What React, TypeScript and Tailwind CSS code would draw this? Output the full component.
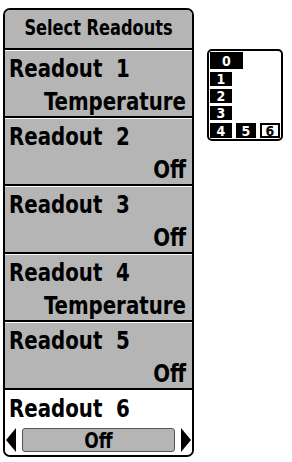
const rows = [
  { label: 'Readout  1', value: 'Temperature' },
  { label: 'Readout  2', value: 'Off' },
  { label: 'Readout  3', value: 'Off' },
  { label: 'Readout  4', value: 'Temperature' },
  { label: 'Readout  5', value: 'Off' },
]

function LayoutIcon() {
  return (
    <div className="ml-[13px] mt-[49px] w-[76px] h-[92px] border-2 border-black rounded-[5px] bg-white flex flex-col gap-[3px] p-[1px] text-white text-[14px] leading-none">
      <div className="w-[33px] h-[19px] bg-black flex items-center justify-center">0</div>
      <div className="w-[22px] h-[15px] bg-black flex items-center justify-center">1</div>
      <div className="w-[22px] h-[15px] bg-black flex items-center justify-center">2</div>
      <div className="w-[22px] h-[15px] bg-black flex items-center justify-center">3</div>
      <div className="flex gap-[4px]">
        <div className="w-[22px] h-[15px] bg-black flex items-center justify-center">4</div>
        <div className="w-[20px] h-[15px] bg-black flex items-center justify-center">5</div>
        <div className="w-[20px] h-[15px] border-2 border-black text-black flex items-center justify-center">6</div>
      </div>
    </div>
  )
}

export default function App() {
  return (
    <div className="w-[292px] h-[462px] bg-white flex items-start font-['DejaVu_Sans_Condensed','DejaVu_Sans',sans-serif] font-bold text-black">
      <div className="ml-[3px] mt-[8px] w-[191px] border-2 border-black rounded-[7px] overflow-hidden flex flex-col">
        <div className="h-[38px] bg-[#b5b5b5] flex items-center justify-center text-[18px] leading-none pb-[3px]">
          <span className="scale-y-[1.15]">Select Readouts</span>
        </div>
        {rows.map(r => (
          <div key={r.label} className="h-[68px] bg-[#b5b5b5] border-t-2 border-black shadow-[inset_0_1px_0_#fff] flex flex-col px-[4px] pt-[7px] text-[22px] leading-none">
            <div className="whitespace-pre scale-y-[1.12] origin-top">{r.label}</div>
            <div className="mt-[11px] text-right pr-[2px] scale-y-[1.12] origin-top">{r.value}</div>
          </div>
        ))}
        <div className="h-[67px] bg-white border-t-2 border-black flex flex-col pt-[7px] text-[22px] leading-none">
          <div className="whitespace-pre px-[4px] scale-y-[1.12] origin-top">Readout  6</div>
          <div className="mt-[9px] flex items-center">
            <div className="w-0 h-0 border-y-[12px] border-y-transparent border-r-[10px] border-r-black ml-[1px]" />
            <div className="flex-1 mx-[6px] h-[24px] bg-[#b5b5b5] border border-[#555] rounded-[3px] flex items-center justify-center text-[19px]">
              <span className="scale-y-[1.12]">Off</span>
            </div>
            <div className="w-0 h-0 border-y-[12px] border-y-transparent border-l-[10px] border-l-black mr-[1px]" />
          </div>
        </div>
      </div>
      <LayoutIcon />
    </div>
  )
}
